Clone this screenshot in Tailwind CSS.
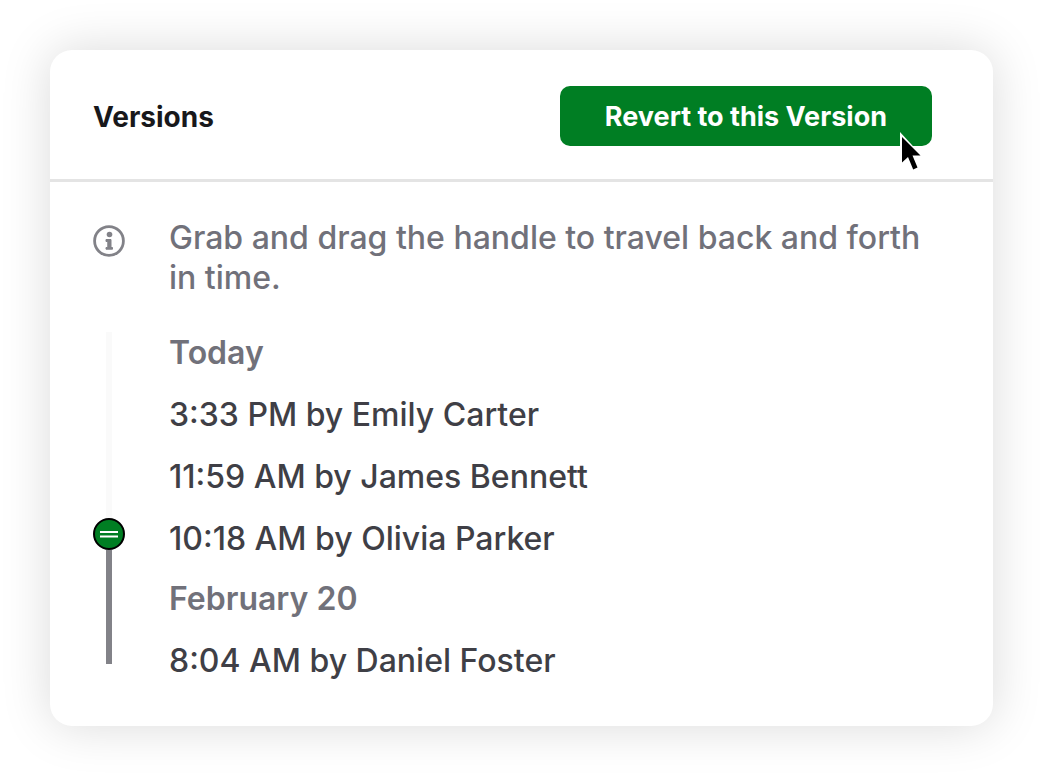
<!DOCTYPE html>
<html lang="en">
<head>
<meta charset="utf-8">
<meta name="viewport" content="width=device-width, initial-scale=1">
<title>Versions</title>
<script src="https://cdn.jsdelivr.net/npm/@tailwindcss/browser@4"></script>
</head>
<body class="bg-white p-[50px] font-['Inter',sans-serif]">
<main class="rounded-[22px] bg-white pb-[45px] shadow-[0_0_50px_rgba(0,0,0,0.15)]">
  <header class="flex items-center justify-between border-b-[3px] border-[#e4e4e4] pt-9 pr-[61px] pb-[33px] pl-[43px]">
    <h1 class="pt-[2px] text-[28px] leading-9 font-bold text-[#18181b]">Versions</h1>
    <div class="relative">
      <button type="button" class="h-[60px] rounded-[10px] bg-[#007e23] px-[45px] pt-[2px] text-[27px] leading-9 font-bold text-white">Revert to this Version</button>
      <svg class="pointer-events-none absolute right-2 -bottom-[26px] h-10 w-6" viewBox="0 0 24 40" aria-hidden="true">
        <path d="M0 0V33.500L7.500 27L12.500 39.500L19.500 36L15 25.500H23.500Z" fill="#fff"/>
        <path d="M2 5V30.500L8 25L13.200 37.500L17.500 35.500L12.500 23.500H20.500Z" fill="#000"/>
      </svg>
    </div>
  </header>
  <section class="grid grid-cols-[32px_1fr] gap-x-11 gap-y-[34px] pt-9 pr-11 pl-[43px] text-[32px] leading-10 font-medium">
    <svg class="mt-[7px] size-8" viewBox="0 0 32 32" fill="none" aria-hidden="true">
      <circle cx="16" cy="16" r="14.400" stroke="#828288" stroke-width="2.800"/>
      <circle cx="16.500" cy="9.500" r="2.800" fill="#828288"/>
      <path d="M13 14.500H18V22.500H19.500V24.200H13V22.500H14.800V16.500H13Z" fill="#828288" stroke="#828288" stroke-linejoin="round"/>
    </svg>
    <p class="text-[#71717a]">Grab and drag the handle to travel back and forth in time.</p>
    <div class="relative flex flex-col items-center pb-[17px]">
      <div class="w-[6px] grow-[186] bg-[#fafafa]"></div>
      <svg class="size-8 shrink-0" viewBox="0 0 32 32" aria-hidden="true">
        <circle cx="16" cy="16" r="15" fill="#007e23" stroke="#000" stroke-width="2"/>
        <path d="M7 14H25M7 18.500H25" stroke="#fff" stroke-width="2"/>
      </svg>
      <div class="w-[6px] grow-[114] bg-[#828288]"></div>
      <input type="range" min="0" max="100" value="38" aria-label="Version" class="absolute inset-0 h-full w-full cursor-grab opacity-0 [direction:rtl] [writing-mode:vertical-lr]">
    </div>
    <div class="flex flex-col gap-5 pt-px text-[#3f3f46]">
      <section class="flex flex-col gap-[22px]">
        <h2 class="font-semibold text-[#71717a]">Today</h2>
        <p>3:33 PM by Emily Carter</p>
        <p>11:59 AM by James Bennett</p>
        <p>10:18 AM by Olivia Parker</p>
      </section>
      <section class="flex flex-col gap-[22px]">
        <h2 class="font-semibold text-[#71717a]">February 20</h2>
        <p>8:04 AM by Daniel Foster</p>
      </section>
    </div>
  </section>
</main>
</body>
</html>
